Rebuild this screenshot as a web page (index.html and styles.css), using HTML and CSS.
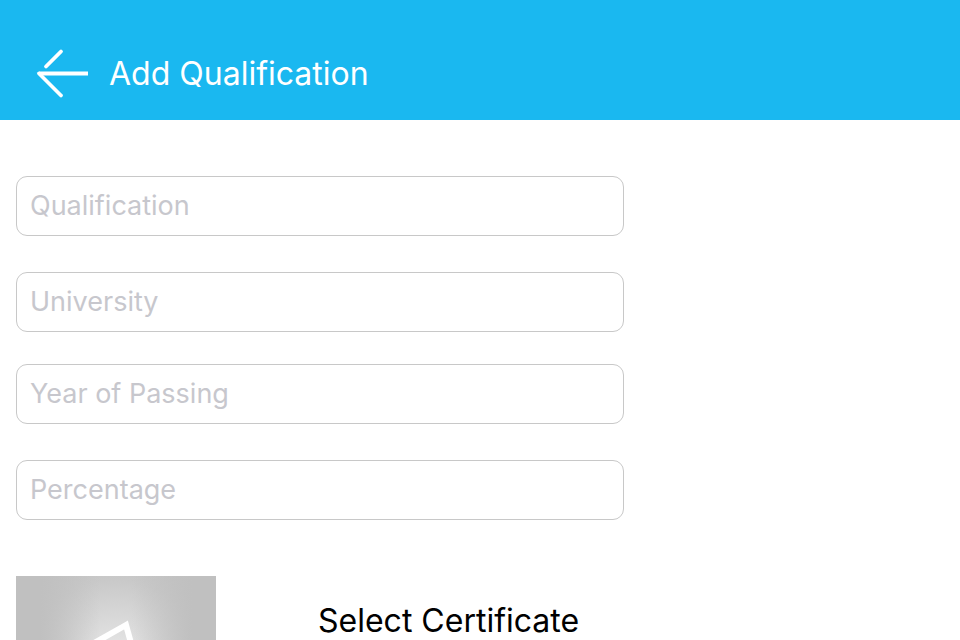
FILE: index.html
```html
<!DOCTYPE html>
<html lang="en">
<head>
  <meta charset="utf-8">
  <meta name="viewport" content="width=device-width, initial-scale=1">
  <title>Add Qualification</title>
  <link rel="stylesheet" href="styles.css">
</head>
<body>
  <header class="topbar">
    <button class="back" type="button" aria-label="Back">
      <svg width="52" height="52" viewBox="0 0 52 52" fill="none" stroke="#fff" stroke-width="3.8" stroke-linejoin="round">
        <path d="M10 18.500 25 3.500" stroke-linecap="round"/>
        <path d="M52 25.500H3"/>
        <path d="M3 25.500 25 47.500" stroke-linecap="round"/>
      </svg>
    </button>
    <h1 class="title">Add Qualification</h1>
  </header>
  <main>
    <form class="form">
      <div class="pair">
        <input class="field" type="text" placeholder="Qualification" aria-label="Qualification">
        <input class="field" type="text" placeholder="University" aria-label="University">
      </div>
      <div class="pair">
        <input class="field" type="text" placeholder="Year of Passing" aria-label="Year of Passing">
        <input class="field" type="text" placeholder="Percentage" aria-label="Percentage">
      </div>
      <div class="certificate">
        <div class="preview">
          <svg width="200" height="200" viewBox="0 0 200 200" fill="none" stroke="#fff" stroke-width="6">
            <path d="M110 49 34 92 60 154 138 150Z"/>
          </svg>
        </div>
        <button class="select" type="button">Select Certificate</button>
      </div>
    </form>
  </main>
</body>
</html>
```
FILE: styles.css
```css
* {
  box-sizing: border-box;
}

body {
  margin: 0;
  height: 100vh;
  overflow: hidden;
  background: #fff;
  font-family: Inter, "Liberation Sans", sans-serif;
}

button {
  padding: 0;
  border: 0;
  background: none;
  font: inherit;
  color: inherit;
}

svg {
  display: block;
}

.topbar {
  display: flex;
  align-items: center;
  gap: 21px;
  height: 120px;
  padding: 28px 36px 0;
  background: #1ab8f0;
  color: #fff;
}

.title {
  margin: 0;
  font-size: 32px;
  line-height: 40px;
  font-weight: 400;
}

.form {
  display: flex;
  flex-direction: column;
  gap: 32px;
  width: 640px;
  max-width: 100%;
  padding: 56px 16px;
}

.pair {
  display: flex;
  flex-direction: column;
  gap: 36px;
}

.field {
  width: 100%;
  height: 60px;
  padding: 0 13px 2px;
  border: 1px solid #c8c8c8;
  border-radius: 11px;
  background: #fff;
  color: #000;
  font: 400 27px Inter, "Liberation Sans", sans-serif;
}

.field::placeholder {
  color: #c7c7cd;
  opacity: 1;
}

.certificate {
  display: flex;
  align-items: flex-start;
  gap: 102px;
  margin-top: 24px;
}

.preview {
  width: 200px;
  height: 200px;
  background:
    linear-gradient(90deg, #c0c0c0 24px, #c0c0c000 84px, #c0c0c000 116px, #c0c0c0 176px),
    radial-gradient(circle 120px at center, #f0f0f0 0%, #dadada 45%, #c9c9c9 80%, #c4c4c4 100%);
}

.select {
  margin-top: 25px;
  font-size: 32px;
  line-height: 40px;
}
```
